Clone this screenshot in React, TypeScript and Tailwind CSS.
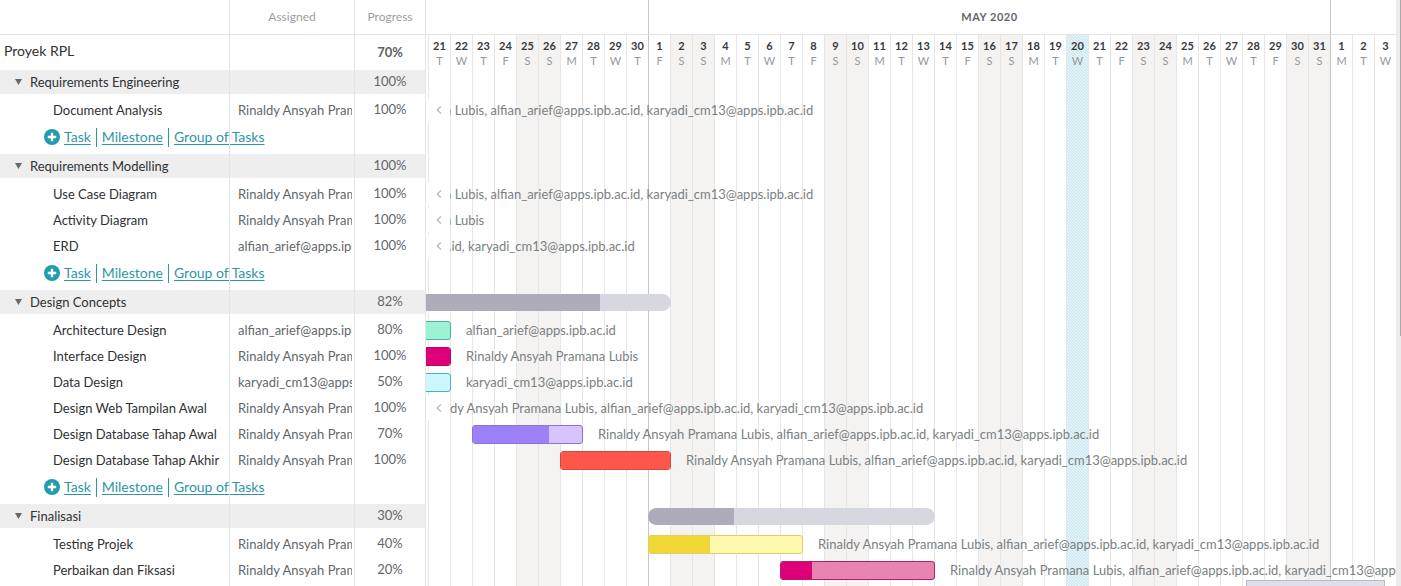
import { Fragment, useState } from "react";

const RINALDY = "Rinaldy Ansyah Pramana Lubis";
const ALFIAN = "alfian_arief@apps.ipb.ac.id";
const KARYADI = "karyadi_cm13@apps.ipb.ac.id";
const TEAM = [RINALDY, ALFIAN, KARYADI];

const DAY = 22;
const ORIGIN = 2;
const VISIBLE_DAYS = 44;
const TODAY = 29;

type Task = {
  name: string;
  assigned: string[];
  progress: number;
  start: number;
  end: number;
  frame?: string;
  fill?: string;
};

type Group = {
  name: string;
  progress: number;
  bar?: { start: number; end: number };
  tasks: Task[];
  links: boolean;
};

const GROUPS: Group[] = [
  {
    name: "Requirements Engineering",
    progress: 100,
    links: true,
    tasks: [{ name: "Document Analysis", assigned: TEAM, progress: 100, start: -10, end: -6 }],
  },
  {
    name: "Requirements Modelling",
    progress: 100,
    links: true,
    tasks: [
      { name: "Use Case Diagram", assigned: TEAM, progress: 100, start: -10, end: -6 },
      { name: "Activity Diagram", assigned: [RINALDY], progress: 100, start: -10, end: -6 },
      { name: "ERD", assigned: [ALFIAN, KARYADI], progress: 100, start: -10, end: -6 },
    ],
  },
  {
    name: "Design Concepts",
    progress: 82,
    bar: { start: -7, end: 11 },
    links: true,
    tasks: [
      { name: "Architecture Design", assigned: [ALFIAN], progress: 80, start: -7, end: 1, frame: "border-[#45b39d] bg-[#9bf2d4]", fill: "bg-[#3fd9ab]" },
      { name: "Interface Design", assigned: [RINALDY], progress: 100, start: -7, end: 1, frame: "border-[#b3085f] bg-[#e884b0]", fill: "bg-[#dd0078]" },
      { name: "Data Design", assigned: [KARYADI], progress: 50, start: -7, end: 1, frame: "border-[#43b4c8] bg-[#cbf8ff]", fill: "bg-[#5fe0f5]" },
      { name: "Design Web Tampilan Awal", assigned: TEAM, progress: 100, start: -7, end: -1 },
      { name: "Design Database Tahap Awal", assigned: TEAM, progress: 70, start: 2, end: 7, frame: "border-[#8d72d6] bg-[#d8c4fc]", fill: "bg-[#9b80f7]" },
      { name: "Design Database Tahap Akhir", assigned: TEAM, progress: 100, start: 6, end: 11, frame: "border-[#d04a41] bg-[#ffb3ac]", fill: "bg-[#ff564a]" },
    ],
  },
  {
    name: "Finalisasi",
    progress: 30,
    bar: { start: 10, end: 23 },
    links: false,
    tasks: [
      { name: "Testing Projek", assigned: TEAM, progress: 40, start: 10, end: 17, frame: "border-[#ddd069] bg-[#fff8ad]", fill: "bg-[#f0d735]" },
      { name: "Perbaikan dan Fiksasi", assigned: TEAM, progress: 20, start: 16, end: 23, frame: "border-[#ad1f66] bg-[#e884b0]", fill: "bg-[#dd0078]" },
    ],
  },
];

const LETTERS = ["T", "W", "T", "F", "S", "S", "M"];

const DAYS = Array.from({ length: VISIBLE_DAYS }, (_, i) => {
  const date = i < 10 ? 21 + i : i < 41 ? i - 9 : i - 40;
  const letter = LETTERS[i % 7];
  return { i, date, letter, weekend: letter === "S", first: date === 1 };
});

const left = (day: number) => ORIGIN + day * DAY;
const span = (start: number, end: number) => (end - start) * DAY + 1;

function Cells({ children, label, bold }: { children?: React.ReactNode; label?: string; bold?: boolean }) {
  return (
    <>
      <td className="relative border-l border-[#e4e4e4] p-0">{children}</td>
      <td
        className={
          bold
            ? "relative border-x border-[#e4e4e4] p-0 text-center font-bold text-[#5c5f63]"
            : "relative border-x border-[#e4e4e4] p-0 text-center text-[#63676b]"
        }
      >
        {label}
      </td>
    </>
  );
}

function Spacer({ size }: { size: string }) {
  return (
    <tr aria-hidden="true" className={size}>
      <td className="p-0" />
      <Cells />
    </tr>
  );
}

function AddLinks() {
  const link = "shrink-0 text-sm leading-5 underline underline-offset-2";
  const divider = "mx-[5px] h-[19px] w-px shrink-0 bg-[#2e97a7]";
  return (
    <div className="flex items-center pl-11 whitespace-nowrap text-[#2e97a7]">
      <svg width="16" height="16" viewBox="0 0 16 16" aria-hidden="true" className="shrink-0">
        <circle cx="8" cy="8" r="8" fill="#1f9cad" />
        <path d="M8 3.8v8.4M3.8 8h8.4" stroke="#fff" strokeWidth="2.4" />
      </svg>
      <a href="#task" className={"ml-1 " + link}>Task</a>
      <span className={divider} />
      <a href="#milestone" className={link}>Milestone</a>
      <span className={divider} />
      <a href="#group" className={link}>Group of Tasks</a>
    </div>
  );
}

function TaskTable({ closed, toggle }: { closed: string[]; toggle: (name: string) => void }) {
  return (
    <table className="h-full w-[426px] shrink-0 table-fixed border-separate border-spacing-0 text-[#2f3133]">
      <colgroup>
        <col className="w-[229px]" />
        <col className="w-[125px]" />
        <col className="w-[72px]" />
      </colgroup>
      <thead>
        <tr className="h-[35px] text-xs text-[#9a9ea1]">
          <td className="border-b border-[#e4e4e4] p-0" />
          <th className="border-b border-l border-[#e4e4e4] p-0 font-normal">Assigned</th>
          <th className="border-x border-b border-[#e4e4e4] p-0 font-normal">Progress</th>
        </tr>
      </thead>
      <tbody>
        <tr className="h-[35px]">
          <td className="p-0 pb-1 pl-1 text-sm">Proyek RPL</td>
          <Cells label="70%" bold />
        </tr>
        {GROUPS.map((g) => {
          const open = !closed.includes(g.name);
          return (
            <Fragment key={g.name}>
              <tr className="h-6 bg-[#eeeeee]">
                <td className="p-0">
                  <button
                    type="button"
                    aria-expanded={open}
                    onClick={() => toggle(g.name)}
                    className="flex items-center gap-2 pl-[15px] leading-4"
                  >
                    <svg width="7" height="6" viewBox="0 0 7 6" aria-hidden="true" className={open ? "" : "-rotate-90"}>
                      <path d="M0 0h7L3.5 6z" fill="#66696c" />
                    </svg>
                    {g.name}
                  </button>
                </td>
                <Cells label={g.progress + "%"} />
              </tr>
              <Spacer size="h-[3px]" />
              {open &&
                g.tasks.map((t) => (
                  <tr key={t.name} className="h-[26px]">
                    <td className="p-0 pl-[53px] leading-5 whitespace-nowrap">{t.name}</td>
                    <Cells label={t.progress + "%"}>
                      <div className="mr-0.5 ml-2 overflow-hidden leading-5 whitespace-nowrap text-[#63676b]">
                        {t.assigned.join(", ")}
                      </div>
                    </Cells>
                  </tr>
                ))}
              {g.links && (
                <>
                  <tr className="h-7">
                    <td className="p-0"><AddLinks /></td>
                    <Cells />
                  </tr>
                  <Spacer size="h-[3px]" />
                </>
              )}
            </Fragment>
          );
        })}
        <tr aria-hidden="true">
          <td className="p-0" />
          <Cells />
        </tr>
      </tbody>
    </table>
  );
}

function TaskBar({ task }: { task: Task }) {
  const label = task.assigned.join(", ");
  if (!task.frame) {
    return (
      <div className="flex h-[26px] items-center">
        <button type="button" aria-label={"Scroll to " + task.name} className="flex h-6 w-6 shrink-0 items-center justify-center bg-white pl-0.5">
          <svg width="6" height="8" viewBox="0 0 6 8" fill="none" stroke="#bdbdbd" strokeWidth="1.4" aria-hidden="true">
            <path d="M5 .5L1.200 4L5 7.500" />
          </svg>
        </button>
        <div className="min-w-0 flex-1 overflow-hidden leading-5 whitespace-nowrap">
          <span style={{ marginLeft: left(task.end) - 8 }}>{label}</span>
        </div>
      </div>
    );
  }
  return (
    <div className="flex h-[26px] items-center">
      <div
        className={"h-[19px] shrink-0 overflow-hidden rounded-[3px] border " + task.frame}
        style={{ marginLeft: left(task.start), width: span(task.start, task.end) }}
      >
        <div className={"h-full " + task.fill} style={{ width: task.progress + "%" }} />
      </div>
      <span className="ml-[15px] leading-5 whitespace-nowrap">{label}</span>
    </div>
  );
}

function Timeline({ closed }: { closed: string[] }) {
  return (
    <div className="flex min-w-0 flex-1 flex-col overflow-hidden">
      <div className="flex h-[35px] shrink-0 border-b border-[#e4e4e4] text-[11px] font-bold tracking-wider text-[#63676b]">
        <div className="w-[222px] shrink-0" />
        <div className="flex w-[682px] shrink-0 items-center justify-center border-l border-[#c6c6c6]">MAY 2020</div>
        <div className="flex-1 border-l border-[#c6c6c6]" />
      </div>
      <div className="grid min-h-0 flex-1 grid-cols-[minmax(0,1fr)]">
        <div className="col-start-1 row-start-1 flex pl-0.5">
          {DAYS.map((d) => (
            <div
              key={d.i}
              className={
                "w-[22px] shrink-0 border-l pt-[3px] text-center " +
                (d.first ? "border-[#c6c6c6] " : "border-[#e6e6e6] ") +
                (d.i === TODAY
                  ? "bg-[linear-gradient(45deg,#cfeaf1_25%,#eef8fb_25%_50%,#cfeaf1_50%_75%,#eef8fb_75%)] bg-size-[3px_3px]"
                  : d.weekend
                    ? "bg-[#f4f3f2]"
                    : "")
              }
            >
              <div className="text-[11px] leading-[15px] font-bold text-[#38393c]">{d.date}</div>
              <div className="text-[11px] leading-[15px] text-[#94989c]">{d.letter}</div>
            </div>
          ))}
        </div>
        <div className="col-start-1 row-start-1 pt-[35px] text-[#7b7f82]">
          {GROUPS.map((g) => (
            <div key={g.name}>
              <div className="h-[27px] overflow-hidden pt-1">
                {g.bar && (
                  <div
                    className="h-[17px] overflow-hidden rounded-full bg-[#d7d7df]"
                    style={{ marginLeft: left(g.bar.start), width: span(g.bar.start, g.bar.end) }}
                  >
                    <div className="h-full bg-[#adacb8]" style={{ width: g.progress + "%" }} />
                  </div>
                )}
              </div>
              {!closed.includes(g.name) && g.tasks.map((t) => <TaskBar key={t.name} task={t} />)}
              {g.links && <div className="h-[31px]" />}
            </div>
          ))}
        </div>
      </div>
    </div>
  );
}

export default function App() {
  const [closed, setClosed] = useState<string[]>([]);
  const toggle = (name: string) =>
    setClosed((c) => (c.includes(name) ? c.filter((n) => n !== name) : [...c, name]));

  return (
    <main className="relative flex h-screen overflow-hidden bg-white font-['Lato',sans-serif] text-[13px]">
      <TaskTable closed={closed} toggle={toggle} />
      <Timeline closed={closed} />
      <div className="flex w-[5px] shrink-0 justify-end bg-[#ececec]">
        <div className="h-[336px] w-px bg-[#a9a9a9]" />
      </div>
      <div className="absolute right-4 bottom-0 h-1.5 w-[139px] border border-b-0 border-[#b9b7cb] bg-[#dfdfe9]" />
    </main>
  );
}
